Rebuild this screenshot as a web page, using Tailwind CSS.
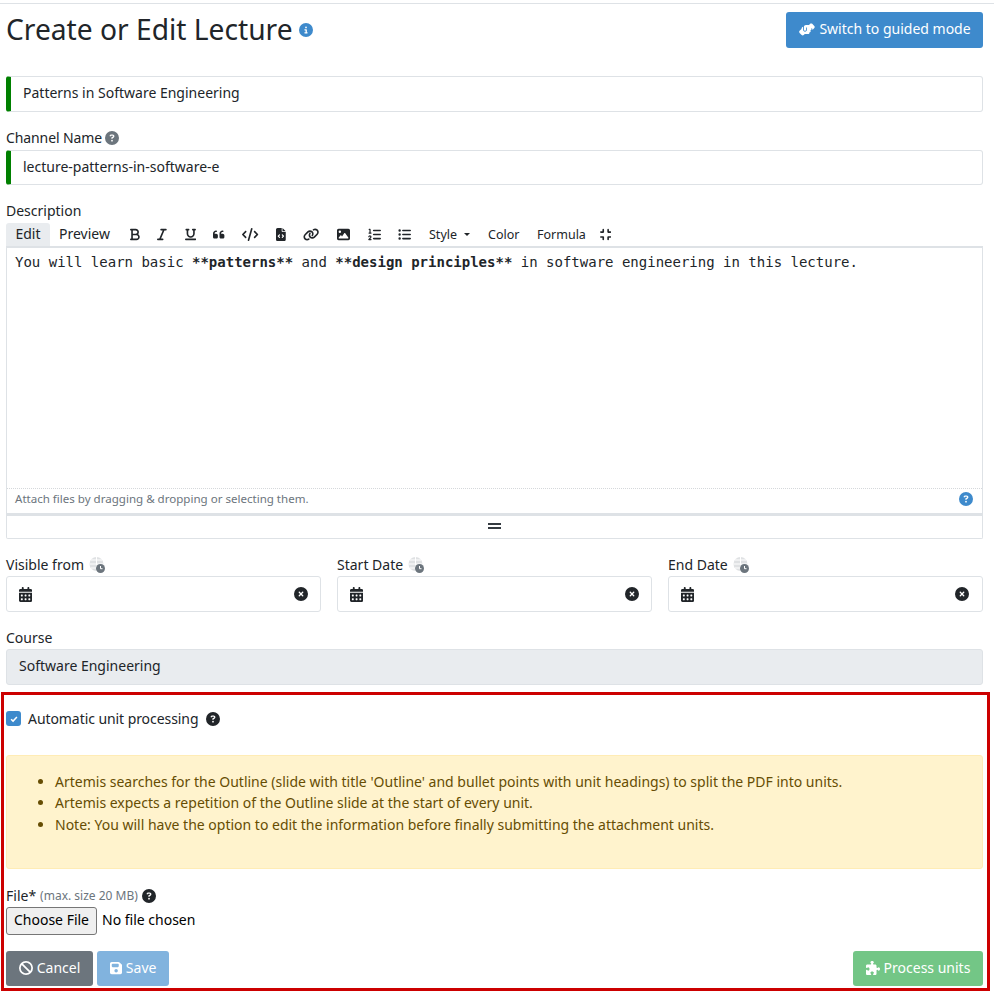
<!doctype html>
<html lang="en">
<head>
<meta charset="utf-8">
<title>Create or Edit Lecture</title>
<script src="https://cdn.jsdelivr.net/npm/@tailwindcss/browser@4"></script>
</head>
<body class="bg-white text-[#212529] font-['Noto_Sans',sans-serif] text-[14px] leading-[21px]">
<div class="w-[994px] h-[993px] overflow-hidden border-t-0 pt-[3px]">
  <div class="h-px bg-[#dee2e6]"></div>
  <div class="pl-[6px] pr-[11px]">

    <!-- header -->
    <div class="flex items-start justify-between pt-[8px] h-[72px]">
      <div class="flex items-center h-[36px] gap-[6px]">
        <h2 class="text-[28.2px] leading-[34px] pb-[2px]">Create or Edit Lecture</h2>
        <svg viewBox="0 0 512 512" class="w-[14px] h-[14px] fill-[#3e8acc]"><path d="M256 512A256 256 0 1 0 256 0a256 256 0 1 0 0 512zM216 336h24V272H216c-13.3 0-24-10.7-24-24s10.7-24 24-24h48c13.3 0 24 10.7 24 24v88h8c13.3 0 24 10.7 24 24s-10.7 24-24 24H216c-13.3 0-24-10.7-24-24s10.7-24 24-24zm40-208a32 32 0 1 1 0 64 32 32 0 1 1 0-64z"/></svg>
      </div>
      <button class="flex items-center justify-center gap-[4px] w-[197px] h-[36px] pb-[4px] rounded-[3px] bg-[#3e8acc] text-white">
        <svg viewBox="0 0 640 512" class="w-[17px] h-[14px] fill-white mt-[3px]"><path d="M544 248v3.3l69.7-69.7c21.9-21.9 21.9-57.3 0-79.2L535.6 24.4c-21.9-21.9-57.3-21.9-79.2 0L416.3 64.5c-2.7-.3-5.5-.5-8.3-.5H296c-37.1 0-67.6 28-71.6 64H224V248c0 22.1 17.9 40 40 40s40-17.9 40-40V176c0 0 0-.1 0-.1V160l16 0 136 0c0 0 0 0 .1 0H464c44.2 0 80 35.8 80 80v8zM336 192v56c0 39.8-32.2 72-72 72s-72-32.2-72-72V129.4c-35.3 12.4-60.6 46-60.6 85.6L59.7 286.3c-21.9 21.9-21.9 57.3 0 79.2l78.1 78.1c21.9 21.9 57.3 21.9 79.2 0l37.7-37.7c.9 0 1.8 .1 2.7 .1H384c26.5 0 48-21.5 48-48c0-5.6-1-11-2.7-16H432c26.5 0 48-21.5 48-48c0-12.8-5-24.4-13.2-33c25.7-5 45.1-27.5 45.2-54.5c0-44.1-35.7-79.9-79.8-80H336z"/></svg>
        Switch to guided mode
      </button>
    </div>

    <!-- title -->
    <div class="h-[36px] flex items-center rounded-[3px] border border-[#dee2e6] border-l-[5px] border-l-[#008000] pl-[12px] pb-[4px]">Patterns in Software Engineering</div>

    <!-- channel name -->
    <div class="flex items-center gap-[3px] h-[21px] mt-[15px]">
      <span class="tracking-[-0.1px]">Channel Name</span>
      <svg viewBox="0 0 512 512" class="w-[14px] h-[14px] fill-[#6c757d]"><path d="M256 512A256 256 0 1 0 256 0a256 256 0 1 0 0 512zM169.8 165.3c7.9-22.3 29.1-37.3 52.8-37.3h58.3c34.9 0 63.1 28.3 63.1 63.1c0 22.6-12.1 43.5-31.7 54.8L280 264.4c-.2 13-10.9 23.6-24 23.6c-13.3 0-24-10.7-24-24V250.5c0-8.6 4.6-16.5 12.1-20.8l44.3-25.4c4.7-2.7 7.6-7.7 7.6-13.1c0-8.4-6.8-15.1-15.1-15.1H222.6c-3.4 0-6.4 2.1-7.5 5.3l-.4 1.2c-4.4 12.5-18.2 19-30.6 14.6s-19-18.2-14.6-30.6l.4-1.2zM224 352a32 32 0 1 1 64 0 32 32 0 1 1 -64 0z"/></svg>
    </div>
    <div class="h-[35px] mt-[2px] flex items-center rounded-[3px] border border-[#dee2e6] border-l-[5px] border-l-[#008000] pl-[12px] pb-[2px]">lecture-patterns-in-software-e</div>

    <!-- description -->
    <div class="h-[21px] mt-[15px]">Description</div>

    <!-- markdown toolbar -->
    <div class="flex items-center h-[23px] mt-[2px]">
      <span class="flex items-center justify-center w-[44px] h-[23px] pb-[2px] bg-[#e9ecef] rounded-t-[3px]">Edit</span>
      <span class="ml-[9px] w-[71px] mb-[2px]">Preview</span>
      <div class="flex items-center gap-[17.5px] fill-[#212529]">
        <svg viewBox="0 0 384 512" class="h-[13px]"><path d="M0 64C0 46.3 14.3 32 32 32H80 96 224c70.7 0 128 57.3 128 128c0 31.3-11.3 60.1-30 82.3c37.1 22.4 62 63.1 62 109.7c0 70.7-57.3 128-128 128H96 80 32c-17.7 0-32-14.3-32-32s14.3-32 32-32H48V256 96H32C14.3 96 0 81.7 0 64zM224 224c35.3 0 64-28.7 64-64s-28.7-64-64-64H112V224H224zM112 288V416H256c35.3 0 64-28.7 64-64s-28.7-64-64-64H224 112z"/></svg>
        <svg viewBox="0 0 384 512" class="h-[13px]"><path d="M128 64c0-17.7 14.3-32 32-32H352c17.7 0 32 14.3 32 32s-14.3 32-32 32H293.3L160 416h64c17.7 0 32 14.3 32 32s-14.3 32-32 32H32c-17.7 0-32-14.3-32-32s14.3-32 32-32H90.7L224 96H160c-17.7 0-32-14.3-32-32z"/></svg>
        <svg viewBox="0 0 448 512" class="h-[13px]"><path d="M16 64c0-17.7 14.3-32 32-32h96c17.7 0 32 14.3 32 32s-14.3 32-32 32H128V224c0 53 43 96 96 96s96-43 96-96V96H304c-17.7 0-32-14.3-32-32s14.3-32 32-32h96c17.7 0 32 14.3 32 32s-14.3 32-32 32H384V224c0 88.4-71.6 160-160 160s-160-71.6-160-160V96H48C30.3 96 16 81.7 16 64zM0 448c0-17.7 14.3-32 32-32H416c17.7 0 32 14.3 32 32s-14.3 32-32 32H32c-17.7 0-32-14.3-32-32z"/></svg>
        <svg viewBox="0 0 448 512" class="h-[13px]"><path d="M0 216C0 149.7 53.7 96 120 96h8c17.7 0 32 14.3 32 32s-14.3 32-32 32h-8c-30.9 0-56 25.1-56 56v8h64c35.3 0 64 28.7 64 64v64c0 35.3-28.7 64-64 64H64c-35.3 0-64-28.7-64-64V320 288 216zm256 0c0-66.3 53.7-120 120-120h8c17.7 0 32 14.3 32 32s-14.3 32-32 32h-8c-30.9 0-56 25.1-56 56v8h64c35.3 0 64 28.7 64 64v64c0 35.3-28.7 64-64 64H320c-35.3 0-64-28.7-64-64V320 288 216z"/></svg>
        <svg viewBox="0 0 640 512" class="h-[13px]"><path d="M392.8 1.2c-17-4.9-34.7 5-39.6 22l-128 448c-4.9 17 5 34.7 22 39.6s34.7-5 39.6-22l128-448c4.9-17-5-34.7-22-39.6zm80.6 120.1c-12.5 12.5-12.5 32.8 0 45.3L562.7 256l-89.4 89.4c-12.5 12.5-12.5 32.8 0 45.3s32.8 12.5 45.3 0l112-112c12.5-12.5 12.5-32.8 0-45.3l-112-112c-12.5-12.5-32.8-12.5-45.3 0zm-306.7 0c-12.5-12.5-32.8-12.5-45.3 0l-112 112c-12.5 12.5-12.5 32.8 0 45.3l112 112c12.5 12.5 32.8 12.5 45.3 0s12.5-32.8 0-45.3L77.3 256l89.4-89.4c12.5-12.5 12.5-32.8 0-45.3z"/></svg>
        <svg viewBox="0 0 384 512" class="h-[13px]"><path d="M64 0C28.7 0 0 28.7 0 64V448c0 35.3 28.7 64 64 64H320c35.3 0 64-28.7 64-64V160H256c-17.7 0-32-14.3-32-32V0H64zM256 0V128H384L256 0zM153 289l-31 31 31 31c9.4 9.4 9.4 24.6 0 33.9s-24.6 9.4-33.9 0L71 337c-9.4-9.4-9.4-24.6 0-33.9l48-48c9.4-9.4 24.6-9.4 33.9 0s9.4 24.6 0 33.9zM265 255l48 48c9.4 9.4 9.4 24.6 0 33.9l-48 48c-9.4 9.4-24.6 9.4-33.9 0s-9.4-24.6 0-33.9l31-31-31-31c-9.4-9.4-9.4-24.6 0-33.9s24.6-9.4 33.9 0z"/></svg>
        <svg viewBox="0 0 640 512" class="h-[13px]"><path d="M579.8 267.7c56.5-56.5 56.5-148 0-204.5c-50-50-128.8-56.5-186.3-15.4l-1.6 1.1c-14.4 10.3-17.7 30.3-7.4 44.6s30.3 17.7 44.6 7.4l1.6-1.1c32.1-22.9 76-19.3 103.8 8.6c31.5 31.5 31.5 82.5 0 114L422.3 334.8c-31.5 31.5-82.5 31.5-114 0c-27.9-27.9-31.5-71.8-8.6-103.8l1.1-1.6c10.3-14.4 6.9-34.4-7.4-44.6s-34.4-6.9-44.6 7.4l-1.1 1.6C206.5 251.2 213 330 263 380c56.5 56.5 148 56.5 204.5 0L579.8 267.7zM60.2 244.3c-56.5 56.5-56.5 148 0 204.5c50 50 128.8 56.5 186.3 15.4l1.6-1.1c14.4-10.3 17.7-30.3 7.4-44.6s-30.3-17.7-44.6-7.4l-1.6 1.1c-32.1 22.9-76 19.3-103.8-8.6C74 372 74 321 105.5 289.5L217.7 177.2c31.5-31.5 82.5-31.5 114 0c27.9 27.9 31.5 71.8 8.6 103.9l-1.1 1.6c-10.3 14.4-6.9 34.4 7.4 44.6s34.4 6.9 44.6-7.4l1.1-1.6C433.5 260.8 427 182 377 132c-56.5-56.5-148-56.5-204.5 0L60.2 244.3z"/></svg>
        <svg viewBox="0 0 512 512" class="h-[13px]"><path d="M0 96C0 60.7 28.7 32 64 32H448c35.3 0 64 28.7 64 64V416c0 35.3-28.7 64-64 64H64c-35.3 0-64-28.7-64-64V96zM323.8 202.5c-4.5-6.6-11.9-10.5-19.8-10.5s-15.4 3.9-19.8 10.5l-87 127.6L170.7 297c-4.6-5.7-11.5-9-18.7-9s-14.2 3.3-18.7 9l-64 80c-5.8 7.2-6.9 17.1-2.9 25.4s12.4 13.6 21.6 13.6h96 32H424c8.9 0 17.1-4.9 21.2-12.8s3.6-17.4-1.4-24.7l-120-176zM112 192a48 48 0 1 0 0-96 48 48 0 1 0 0 96z"/></svg>
        <svg viewBox="0 0 512 512" class="h-[13px]"><path d="M24 56c0-13.3 10.7-24 24-24H80c13.3 0 24 10.7 24 24V176h16c13.3 0 24 10.7 24 24s-10.7 24-24 24H40c-13.3 0-24-10.7-24-24s10.7-24 24-24H56V80H48C34.7 80 24 69.3 24 56zM86.7 341.2c-6.5-7.4-18.3-6.9-24 1.2L51.5 357.9c-7.7 10.8-22.7 13.3-33.5 5.6s-13.3-22.7-5.6-33.5l11.1-15.6c23.7-33.2 72.3-35.6 99.2-4.9c21.3 24.4 20.8 60.9-1.1 84.7L86.8 432H120c13.3 0 24 10.7 24 24s-10.7 24-24 24H32c-9.5 0-18.2-5.6-22-14.4s-2.1-18.9 4.3-25.9l72-78c5.3-5.8 5.4-14.6 .3-20.5zM224 64H480c17.7 0 32 14.3 32 32s-14.3 32-32 32H224c-17.7 0-32-14.3-32-32s14.3-32 32-32zm0 160H480c17.7 0 32 14.3 32 32s-14.3 32-32 32H224c-17.7 0-32-14.3-32-32s14.3-32 32-32zm0 160H480c17.7 0 32 14.3 32 32s-14.3 32-32 32H224c-17.7 0-32-14.3-32-32s14.3-32 32-32z"/></svg>
        <svg viewBox="0 0 512 512" class="h-[13px]"><path d="M64 144a48 48 0 1 0 0-96 48 48 0 1 0 0 96zM192 64c-17.7 0-32 14.3-32 32s14.3 32 32 32H480c17.7 0 32-14.3 32-32s-14.3-32-32-32H192zm0 160c-17.7 0-32 14.3-32 32s14.3 32 32 32H480c17.7 0 32-14.3 32-32s-14.3-32-32-32H192zm0 160c-17.7 0-32 14.3-32 32s14.3 32 32 32H480c17.7 0 32-14.3 32-32s-14.3-32-32-32H192zM64 464a48 48 0 1 0 0-96 48 48 0 1 0 0 96zm48-208a48 48 0 1 0 -96 0 48 48 0 1 0 96 0z"/></svg>
      </div>
      <span class="ml-[18px] w-[29px] text-[12.5px]">Style</span>
      <span class="ml-[6px] w-0 h-0 border-x-[3px] border-x-transparent border-t-[3px] border-t-[#212529]"></span>
      <span class="ml-[18px] w-[31px] text-[12.5px]">Color</span>
      <span class="ml-[18px] w-[46px] text-[12.5px]">Formula</span>
      <svg viewBox="0 0 448 512" class="h-[13px] ml-[17px] fill-[#212529]"><path d="M160 64c0-17.7-14.3-32-32-32s-32 14.3-32 32v64H32c-17.7 0-32 14.3-32 32s14.3 32 32 32h96c17.7 0 32-14.3 32-32V64zM32 320c-17.7 0-32 14.3-32 32s14.3 32 32 32H96v64c0 17.7 14.3 32 32 32s32-14.3 32-32V352c0-17.7-14.3-32-32-32H32zM352 64c0-17.7-14.3-32-32-32s-32 14.3-32 32v96c0 17.7 14.3 32 32 32h96c17.7 0 32-14.3 32-32s-14.3-32-32-32H352V64zM320 320c-17.7 0-32 14.3-32 32v96c0 17.7 14.3 32 32 32s32-14.3 32-32V384h64c17.7 0 32-14.3 32-32s-14.3-32-32-32H320z"/></svg>
    </div>

    <!-- markdown editor -->
    <div class="border border-t-0 border-[#dee2e6] rounded-b-[2px]">
      <div class="h-[242px] border-t-[2px] border-[#dee2e6] bg-white pl-[8px] pt-[4px] font-['DejaVu_Sans_Mono',monospace] text-[14px] leading-[20px] whitespace-pre">You will learn basic <b>**patterns**</b> and <b>**design principles**</b> in software engineering in this lecture.</div>
      <div class="flex items-center justify-between h-[25px] pb-[4px] border-t border-dotted border-[#d5d8db] pl-[8px] pr-[9px] text-[11.55px] text-[#6c757d]">
        <span class="mb-[2px]">Attach files by dragging &amp; dropping or selecting them.</span>
        <svg viewBox="0 0 512 512" class="w-[14px] h-[14px] fill-[#3e8acc]"><path d="M256 512A256 256 0 1 0 256 0a256 256 0 1 0 0 512zM169.8 165.3c7.9-22.3 29.1-37.3 52.8-37.3h58.3c34.9 0 63.1 28.3 63.1 63.1c0 22.6-12.1 43.5-31.7 54.8L280 264.4c-.2 13-10.9 23.6-24 23.6c-13.3 0-24-10.7-24-24V250.5c0-8.6 4.6-16.5 12.1-20.8l44.3-25.4c4.7-2.7 7.6-7.7 7.6-13.1c0-8.4-6.8-15.1-15.1-15.1H222.6c-3.4 0-6.4 2.1-7.5 5.3l-.4 1.2c-4.4 12.5-18.2 19-30.6 14.6s-19-18.2-14.6-30.6l.4-1.2zM224 352a32 32 0 1 1 64 0 32 32 0 1 1 -64 0z"/></svg>
      </div>
      <div class="flex items-center justify-center h-[25px] pb-[3px] border-t-[3px] border-[#dee2e6]">
        <div class="w-[13px] h-[6px] border-y-2 border-[#343a40]"></div>
      </div>
    </div>

    <!-- dates -->
    <div class="grid grid-cols-3 gap-x-[16px] mt-[15px]">
      <div>
        <div class="flex items-center h-[21px] gap-[5px]">
          <span>Visible from</span>
          <svg viewBox="0 0 18 18" class="w-[18px] h-[18px] mt-[3px]"><circle cx="7.5" cy="7" r="7" fill="#dfe1e3"/><path d="M0.5 7h14M7.5 0v14M2 3h11M2 11h11" stroke="#fff" stroke-width="1"/><circle cx="11.5" cy="11.5" r="4.5" fill="#6c757d"/><path d="M11.5 9v2.7h2" stroke="#fff" stroke-width="1" fill="none"/></svg>
        </div>
        <div class="flex items-center justify-between h-[36px] mt-[1px] pl-[12px] pr-[12px] border border-[#dee2e6] rounded-[3px]">
          <svg viewBox="0 0 448 512" class="h-[15px] fill-[#212529]"><path d="M128 0c17.7 0 32 14.3 32 32V64H288V32c0-17.7 14.3-32 32-32s32 14.3 32 32V64h48c26.5 0 48 21.5 48 48v48H0V112C0 85.5 21.5 64 48 64H96V32c0-17.7 14.3-32 32-32zM0 192H448V464c0 26.5-21.5 48-48 48H48c-26.5 0-48-21.5-48-48V192zm64 80v32c0 8.8 7.2 16 16 16h32c8.8 0 16-7.2 16-16V272c0-8.8-7.2-16-16-16H80c-8.8 0-16 7.2-16 16zm128 0v32c0 8.8 7.2 16 16 16h32c8.8 0 16-7.2 16-16V272c0-8.8-7.2-16-16-16H208c-8.8 0-16 7.2-16 16zm144-16c-8.8 0-16 7.2-16 16v32c0 8.8 7.2 16 16 16h32c8.8 0 16-7.2 16-16V272c0-8.8-7.2-16-16-16H336zM64 400v32c0 8.8 7.2 16 16 16h32c8.8 0 16-7.2 16-16V400c0-8.8-7.2-16-16-16H80c-8.8 0-16 7.2-16 16zm144-16c-8.8 0-16 7.2-16 16v32c0 8.8 7.2 16 16 16h32c8.8 0 16-7.2 16-16V400c0-8.8-7.2-16-16-16H208zm112 16v32c0 8.8 7.2 16 16 16h32c8.8 0 16-7.2 16-16V400c0-8.8-7.2-16-16-16H336c-8.8 0-16 7.2-16 16z"/></svg>
          <svg viewBox="0 0 512 512" class="w-[14px] h-[14px] fill-[#212529]"><path d="M256 512A256 256 0 1 0 256 0a256 256 0 1 0 0 512zM175 175c9.4-9.4 24.6-9.4 33.9 0l47 47 47-47c9.4-9.4 24.6-9.4 33.9 0s9.4 24.6 0 33.9l-47 47 47 47c9.4 9.4 9.4 24.6 0 33.9s-24.6 9.4-33.9 0l-47-47-47 47c-9.4 9.4-24.6 9.4-33.9 0s-9.4-24.6 0-33.9l47-47-47-47c-9.4-9.4-9.4-24.6 0-33.9z"/></svg>
        </div>
      </div>
      <div>
        <div class="flex items-center h-[21px] gap-[5px]">
          <span>Start Date</span>
          <svg viewBox="0 0 18 18" class="w-[18px] h-[18px] mt-[3px]"><circle cx="7.5" cy="7" r="7" fill="#dfe1e3"/><path d="M0.5 7h14M7.5 0v14M2 3h11M2 11h11" stroke="#fff" stroke-width="1"/><circle cx="11.5" cy="11.5" r="4.5" fill="#6c757d"/><path d="M11.5 9v2.7h2" stroke="#fff" stroke-width="1" fill="none"/></svg>
        </div>
        <div class="flex items-center justify-between h-[36px] mt-[1px] pl-[12px] pr-[12px] border border-[#dee2e6] rounded-[3px]">
          <svg viewBox="0 0 448 512" class="h-[15px] fill-[#212529]"><path d="M128 0c17.7 0 32 14.3 32 32V64H288V32c0-17.7 14.3-32 32-32s32 14.3 32 32V64h48c26.5 0 48 21.5 48 48v48H0V112C0 85.5 21.5 64 48 64H96V32c0-17.7 14.3-32 32-32zM0 192H448V464c0 26.5-21.5 48-48 48H48c-26.5 0-48-21.5-48-48V192zm64 80v32c0 8.8 7.2 16 16 16h32c8.8 0 16-7.2 16-16V272c0-8.8-7.2-16-16-16H80c-8.8 0-16 7.2-16 16zm128 0v32c0 8.8 7.2 16 16 16h32c8.8 0 16-7.2 16-16V272c0-8.8-7.2-16-16-16H208c-8.8 0-16 7.2-16 16zm144-16c-8.8 0-16 7.2-16 16v32c0 8.8 7.2 16 16 16h32c8.8 0 16-7.2 16-16V272c0-8.8-7.2-16-16-16H336zM64 400v32c0 8.8 7.2 16 16 16h32c8.8 0 16-7.2 16-16V400c0-8.8-7.2-16-16-16H80c-8.8 0-16 7.2-16 16zm144-16c-8.8 0-16 7.2-16 16v32c0 8.8 7.2 16 16 16h32c8.8 0 16-7.2 16-16V400c0-8.8-7.2-16-16-16H208zm112 16v32c0 8.8 7.2 16 16 16h32c8.8 0 16-7.2 16-16V400c0-8.8-7.2-16-16-16H336c-8.8 0-16 7.2-16 16z"/></svg>
          <svg viewBox="0 0 512 512" class="w-[14px] h-[14px] fill-[#212529]"><path d="M256 512A256 256 0 1 0 256 0a256 256 0 1 0 0 512zM175 175c9.4-9.4 24.6-9.4 33.9 0l47 47 47-47c9.4-9.4 24.6-9.4 33.9 0s9.4 24.6 0 33.9l-47 47 47 47c9.4 9.4 9.4 24.6 0 33.9s-24.6 9.4-33.9 0l-47-47-47 47c-9.4 9.4-24.6 9.4-33.9 0s-9.4-24.6 0-33.9l47-47-47-47c-9.4-9.4-9.4-24.6 0-33.9z"/></svg>
        </div>
      </div>
      <div>
        <div class="flex items-center h-[21px] gap-[5px]">
          <span>End Date</span>
          <svg viewBox="0 0 18 18" class="w-[18px] h-[18px] mt-[3px]"><circle cx="7.5" cy="7" r="7" fill="#dfe1e3"/><path d="M0.5 7h14M7.5 0v14M2 3h11M2 11h11" stroke="#fff" stroke-width="1"/><circle cx="11.5" cy="11.5" r="4.5" fill="#6c757d"/><path d="M11.5 9v2.7h2" stroke="#fff" stroke-width="1" fill="none"/></svg>
        </div>
        <div class="flex items-center justify-between h-[36px] mt-[1px] pl-[12px] pr-[13px] border border-[#dee2e6] rounded-[3px]">
          <svg viewBox="0 0 448 512" class="h-[15px] fill-[#212529]"><path d="M128 0c17.7 0 32 14.3 32 32V64H288V32c0-17.7 14.3-32 32-32s32 14.3 32 32V64h48c26.5 0 48 21.5 48 48v48H0V112C0 85.5 21.5 64 48 64H96V32c0-17.7 14.3-32 32-32zM0 192H448V464c0 26.5-21.5 48-48 48H48c-26.5 0-48-21.5-48-48V192zm64 80v32c0 8.8 7.2 16 16 16h32c8.8 0 16-7.2 16-16V272c0-8.8-7.2-16-16-16H80c-8.8 0-16 7.2-16 16zm128 0v32c0 8.8 7.2 16 16 16h32c8.8 0 16-7.2 16-16V272c0-8.8-7.2-16-16-16H208c-8.8 0-16 7.2-16 16zm144-16c-8.8 0-16 7.2-16 16v32c0 8.8 7.2 16 16 16h32c8.8 0 16-7.2 16-16V272c0-8.8-7.2-16-16-16H336zM64 400v32c0 8.8 7.2 16 16 16h32c8.8 0 16-7.2 16-16V400c0-8.8-7.2-16-16-16H80c-8.8 0-16 7.2-16 16zm144-16c-8.8 0-16 7.2-16 16v32c0 8.8 7.2 16 16 16h32c8.8 0 16-7.2 16-16V400c0-8.8-7.2-16-16-16H208zm112 16v32c0 8.8 7.2 16 16 16h32c8.8 0 16-7.2 16-16V400c0-8.8-7.2-16-16-16H336c-8.8 0-16 7.2-16 16z"/></svg>
          <svg viewBox="0 0 512 512" class="w-[14px] h-[14px] fill-[#212529]"><path d="M256 512A256 256 0 1 0 256 0a256 256 0 1 0 0 512zM175 175c9.4-9.4 24.6-9.4 33.9 0l47 47 47-47c9.4-9.4 24.6-9.4 33.9 0s9.4 24.6 0 33.9l-47 47 47 47c9.4 9.4 9.4 24.6 0 33.9s-24.6 9.4-33.9 0l-47-47-47 47c-9.4 9.4-24.6 9.4-33.9 0s-9.4-24.6 0-33.9l47-47-47-47c-9.4-9.4-9.4-24.6 0-33.9z"/></svg>
        </div>
      </div>
    </div>

    <!-- course -->
    <div class="h-[21px] mt-[15px]">Course</div>
    <div class="h-[36px] flex items-center mt-[1px] pl-[12px] pb-[4px] bg-[#e9ecef] border border-[#dee2e6] rounded-[3px]">Software Engineering</div>

    <!-- highlighted unit processing -->
    <div class="h-[299px] mt-[7px] ml-[-5px] w-[989px] border-[3px] border-[#cc0000] pl-[2px] pr-[4px] flex flex-col">
      <div class="flex items-center h-[21px] mt-[13px]">
        <span class="flex items-center justify-center w-[15px] h-[15px] rounded-[3px] bg-[#3e8acc]">
          <svg viewBox="0 0 12 12" class="w-[10px] h-[10px]"><path d="M2.5 6.2l2.4 2.3 4.6-4.8" stroke="#fff" stroke-width="1.8" fill="none"/></svg>
        </span>
        <span class="ml-[7px] tracking-[-0.07px]">Automatic unit processing</span>
        <svg viewBox="0 0 512 512" class="w-[14px] h-[14px] ml-[8px] fill-[#212529]"><path d="M256 512A256 256 0 1 0 256 0a256 256 0 1 0 0 512zM169.8 165.3c7.9-22.3 29.1-37.3 52.8-37.3h58.3c34.9 0 63.1 28.3 63.1 63.1c0 22.6-12.1 43.5-31.7 54.8L280 264.4c-.2 13-10.9 23.6-24 23.6c-13.3 0-24-10.7-24-24V250.5c0-8.6 4.6-16.5 12.1-20.8l44.3-25.4c4.7-2.7 7.6-7.7 7.6-13.1c0-8.4-6.8-15.1-15.1-15.1H222.6c-3.4 0-6.4 2.1-7.5 5.3l-.4 1.2c-4.4 12.5-18.2 19-30.6 14.6s-19-18.2-14.6-30.6l.4-1.2zM224 352a32 32 0 1 1 64 0 32 32 0 1 1 -64 0z"/></svg>
      </div>

      <div class="h-[114px] mt-[26px] bg-[#fff3cd] border border-[#ffecb5] rounded-[3px] text-[#664d03] pl-[48px] pt-[14.75px]">
        <ul class="list-disc">
          <li class="h-[21.5px]">Artemis searches for the Outline (slide with title 'Outline' and bullet points with unit headings) to split the PDF into units.</li>
          <li class="h-[21.5px]">Artemis expects a repetition of the Outline slide at the start of every unit.</li>
          <li class="h-[21.5px]">Note: You will have the option to edit the information before finally submitting the attachment units.</li>
        </ul>
      </div>

      <div class="flex items-center h-[21px] mt-[16px]">
        <span>File*</span>
        <span class="ml-[4px] text-[12px] text-[#6c757d]">(max. size 20 MB)</span>
        <svg viewBox="0 0 512 512" class="w-[14px] h-[14px] ml-[4px] fill-[#212529]"><path d="M256 512A256 256 0 1 0 256 0a256 256 0 1 0 0 512zM169.8 165.3c7.9-22.3 29.1-37.3 52.8-37.3h58.3c34.9 0 63.1 28.3 63.1 63.1c0 22.6-12.1 43.5-31.7 54.8L280 264.4c-.2 13-10.9 23.6-24 23.6c-13.3 0-24-10.7-24-24V250.5c0-8.6 4.6-16.5 12.1-20.8l44.3-25.4c4.7-2.7 7.6-7.7 7.6-13.1c0-8.4-6.8-15.1-15.1-15.1H222.6c-3.4 0-6.4 2.1-7.5 5.3l-.4 1.2c-4.4 12.5-18.2 19-30.6 14.6s-19-18.2-14.6-30.6l.4-1.2zM224 352a32 32 0 1 1 64 0 32 32 0 1 1 -64 0z"/></svg>
      </div>
      <div class="flex items-center mt-[1px] h-[28px] text-black">
        <span class="flex items-center justify-center w-[91px] h-[28px] pb-[3px] bg-[#efefef] border border-[#767676] rounded-[3px]">Choose File</span>
        <span class="ml-[5px] mb-[4px]">No file chosen</span>
      </div>

      <div class="flex justify-between mt-[16px] text-white">
        <div class="flex gap-[4px]">
          <button class="flex items-center justify-center gap-[4px] w-[87px] h-[35px] pb-[2px] bg-[#6c757d] rounded-[3px]">
            <svg viewBox="0 0 512 512" class="w-[14px] h-[14px] fill-white"><path d="M367.2 412.5L99.5 144.8C77.1 176.1 64 214.5 64 256c0 106 86 192 192 192c41.5 0 79.9-13.1 111.2-35.5zm45.3-45.3C434.9 335.9 448 297.5 448 256c0-106-86-192-192-192c-41.5 0-79.9 13.1-111.2 35.5L412.5 367.2zM0 256a256 256 0 1 1 512 0A256 256 0 1 1 0 256z"/></svg>
            Cancel
          </button>
          <button class="flex items-center justify-center gap-[4px] w-[72px] h-[35px] pb-[2px] bg-[#3e8acc]/65 rounded-[3px]">
            <svg viewBox="0 0 448 512" class="h-[14px] fill-white"><path d="M64 32C28.7 32 0 60.7 0 96V416c0 35.3 28.7 64 64 64H384c35.3 0 64-28.7 64-64V173.3c0-17-6.7-33.3-18.7-45.3L352 50.7C340 38.7 323.7 32 306.7 32H64zm0 96c0-17.7 14.3-32 32-32H288c17.7 0 32 14.3 32 32v64c0 17.7-14.3 32-32 32H96c-17.7 0-32-14.3-32-32V128zM224 288a64 64 0 1 1 0 128 64 64 0 1 1 0-128z"/></svg>
            Save
          </button>
        </div>
        <button class="flex items-center justify-center gap-[4px] w-[130px] h-[35px] pb-[2px] bg-[#28a745]/65 rounded-[3px]">
          <svg viewBox="0 0 512 512" class="h-[14px] fill-white"><path d="M192 104.8c0-9.2-5.8-17.3-13.2-22.8C167.2 73.3 160 61.3 160 48c0-26.5 28.7-48 64-48s64 21.5 64 48c0 13.3-7.2 25.3-18.8 34c-7.4 5.5-13.2 13.6-13.2 22.8c0 12.8 10.4 23.2 23.2 23.2H336c26.5 0 48 21.5 48 48v56.8c0 12.8 10.4 23.2 23.2 23.2c9.2 0 17.3-5.8 22.8-13.2c8.7-11.6 20.7-18.8 34-18.8c26.5 0 48 28.7 48 64s-21.5 64-48 64c-13.3 0-25.3-7.2-34-18.8c-5.5-7.4-13.6-13.2-22.8-13.2c-12.8 0-23.2 10.4-23.2 23.2V464c0 26.5-21.5 48-48 48H279.2c-12.8 0-23.2-10.4-23.2-23.2c0-9.2 5.8-17.3 13.2-22.8c11.6-8.7 18.8-20.7 18.8-34c0-26.5-28.7-48-64-48s-64 21.5-64 48c0 13.3 7.2 25.3 18.8 34c7.4 5.5 13.2 13.6 13.2 22.8c0 12.8-10.4 23.2-23.2 23.2H48c-26.5 0-48-21.5-48-48V343.2C0 330.4 10.4 320 23.2 320c9.2 0 17.3 5.8 22.8 13.2C54.7 344.8 66.7 352 80 352c26.5 0 48-28.7 48-64s-21.5-64-48-64c-13.3 0-25.3 7.2-34 18.8C40.5 250.2 32.4 256 23.2 256C10.4 256 0 245.6 0 232.8V176c0-26.5 21.5-48 48-48H168.8c12.8 0 23.2-10.4 23.2-23.2z"/></svg>
          Process units
        </button>
      </div>
    </div>
  </div>
</div>
</body>
</html>
